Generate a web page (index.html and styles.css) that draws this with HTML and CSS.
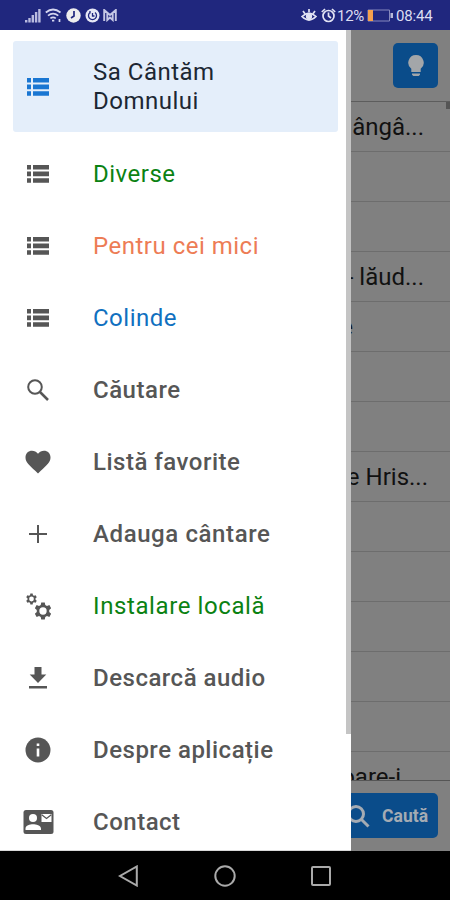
FILE: index.html
```html
<!DOCTYPE html>
<html lang="ro">
<head>
<meta charset="utf-8">
<title>Sa Cântăm Domnului</title>
<link rel="stylesheet" href="styles.css">
</head>
<body>
<svg width="0" height="0" class="defs">
  <symbol id="list" viewBox="0 0 22 18"><path d="M0 0h4v4.500H0zM6 0h16v4.500H6zM0 6.500h4v4.700H0zM6 6.500h16v4.700H6zM0 13.200h4v4.500H0zM6 13.200h16v4.500H6z"/></symbol>
  <symbol id="gear" viewBox="0 0 24 24"><path fill-rule="evenodd" d="M9.500 0h5l.7 3.600 2.400 1.400L21 3.700l2.500 4.400-2.700 2.400v3l2.700 2.400-2.500 4.400-3.400-1.300-2.400 1.400-.7 3.600h-5l-.7-3.600L6.400 19 3 20.300.5 15.900l2.700-2.400v-3L.5 8.100 3 3.700 6.400 5l2.400-1.400zM12 6.800a5.200 5.200 0 1 0 0 10.400 5.200 5.200 0 0 0 0-10.400z"/></symbol>
</svg>
<div class="phone">
  <header class="status">
    <div class="status-icons">
      <svg width="16" height="14" viewBox="0 0 16 14"><path d="M0 11h2.400v2.500H0zM3.300 9h2.400v4.500H3.300zM6.600 6H9v7.500H6.600zM9.900 3h2.400v10.500H9.900zM13.200 0h2.400v13.500h-2.400z" fill="#b9bbe0"/></svg>
      <svg width="17" height="15" viewBox="0 0 17 15" fill="none" stroke="#d5d6ef" stroke-width="1.700"><path d="M.8 4.500Q8 -1.500 15.500 4.500M3 7.600Q8 3.500 13.300 7.600M5.400 10.400Q8 8.500 10.800 10.400"/><path d="M7 12.700h2.300M14.500 11v3" stroke-width="1.700"/></svg>
      <svg width="15" height="15" viewBox="0 0 15 15"><circle cx="7.500" cy="7.500" r="7.200" fill="#eee"/><path d="M8 3v5L5 10" fill="none" stroke="#20277e" stroke-width="1.700"/></svg>
      <svg width="15" height="15" viewBox="0 0 15 15"><circle cx="7.500" cy="7.500" r="7" fill="#e6e7f5"/><path d="M5 4.500a4 4 0 1 0 5 0M7.500 5v3h2M5 3v2.500" fill="none" stroke="#20277e" stroke-width="1.300"/></svg>
      <svg width="14" height="13" viewBox="0 0 14 13" fill="none" stroke="#c5c7e5" stroke-width="1.900"><path d="M1.200 12V1L7 6l5.800-5v11M4.300 4v7L7 8.500 9.700 11V4"/></svg>
    </div>
    <div class="status-right">
      <svg width="16" height="15" viewBox="0 0 16 15" fill="none" stroke="#e2e3f4" stroke-width="1.700"><path d="M1 8.500Q8 2 15 8.500 8 15.500 1 8.500zM8 4V1M3.800 5.500 2 3M12.200 5.500 14 3"/><circle cx="8" cy="8.300" r="2.300" fill="#e2e3f4"/></svg>
      <svg width="15" height="15" viewBox="0 0 15 15" fill="none" stroke="#e2e3f4" stroke-width="1.700"><circle cx="7.500" cy="8" r="5.500"/><path d="M7.500 4.500V8l2.500 2M.8 4 4 1M14.200 4 11 1"/></svg>
      <span class="percent">12%</span>
      <svg width="26" height="13" viewBox="0 0 26 13"><path d="M1 1h21.500v11H1z" fill="none" stroke="#8588bd"/><path d="M1 1h5v11H1z" fill="#f3a04e"/><path d="M23.500 4H26v5h-2.500z" fill="#b8bad9"/></svg>
      <span class="time">08:44</span>
    </div>
  </header>

  <main class="screen">
    <section class="page">
      <div class="toolbar"><button class="bulb"><svg width="16" height="22" viewBox="0 0 16 22" fill="#a3a6a9"><path d="M8 0a7.700 7.700 0 0 0-4.700 13.800V17h9.400v-3.200A7.700 7.700 0 0 0 8 0zM4 18.500h8v1.300L10.700 21H5.300L4 19.800z"/></svg></button></div>
      <div class="songs">
        <div class="song s1">ângâ...</div>
        <div class="song"></div>
        <div class="song"></div>
        <div class="song s2">- lăud...</div>
        <div class="song s3">e</div>
        <div class="song"></div>
        <div class="song"></div>
        <div class="song s4">e Hris...</div>
        <div class="song"></div>
        <div class="song"></div>
        <div class="song"></div>
        <div class="song"></div>
        <div class="song"></div>
        <div class="song s5">oare-i</div>
        <i class="thumb"></i>
      </div>
      <div class="bottom"><button class="search"><svg width="24" height="24" viewBox="0 0 24 24" fill="none" stroke="#a4abb3" stroke-width="3"><circle cx="10" cy="10" r="7.500"/><path d="m15.500 15.500 7 7"/></svg>Caută</button></div>
    </section>

    <nav class="drawer">
      <a class="item active"><span class="icon"><svg width="22" height="18"><use href="#list"/></svg></span><span class="label">Sa Cântăm<br>Domnului</span></a>
      <a class="item"><span class="icon"><svg width="22" height="18"><use href="#list"/></svg></span><span class="label green">Diverse</span></a>
      <a class="item"><span class="icon"><svg width="22" height="18"><use href="#list"/></svg></span><span class="label coral">Pentru cei mici</span></a>
      <a class="item"><span class="icon"><svg width="22" height="18"><use href="#list"/></svg></span><span class="label blue">Colinde</span></a>
      <a class="item"><span class="icon"><svg width="22" height="22" viewBox="0 0 22 22" fill="none" stroke="#565656" stroke-width="2"><circle cx="8" cy="8" r="6.800"/><path d="m13 13 8 8" stroke-width="2.500"/></svg></span><span class="label med">Căutare</span></a>
      <a class="item"><span class="icon"><svg width="26" height="24" viewBox="0 0 26 24"><path d="M13 23.500 10.500 21C4 15 .5 12 .5 7.500.500 3.500 3.400.8 7 .8c2.300 0 4.500 1 6 2.900C14.500 1.800 16.700.8 19 .8c3.600 0 6.500 2.700 6.500 6.700 0 4.500-3.500 7.500-10 13.500z"/></svg></span><span class="label med">Listă favorite</span></a>
      <a class="item"><span class="icon"><svg width="18" height="18" viewBox="0 0 18 18"><path d="M8 0h2v8h8v2h-8v8H8v-8H0V8h8z"/></svg></span><span class="label med wide">Adauga cântare</span></a>
      <a class="item"><span class="icon gears"><svg width="26" height="27" viewBox="0 0 26 27"><use href="#gear" width="11" height="12"/><use href="#gear" x="8.500" y="9" width="17" height="18"/></svg></span><span class="label green wide">Instalare locală</span></a>
      <a class="item"><span class="icon"><svg width="18" height="22" viewBox="0 0 18 22"><path d="M5.500 0h7v7.500h4.800L9 16 .7 7.500h4.800zM0 19h18v2.500H0z"/></svg></span><span class="label med">Descarcă audio</span></a>
      <a class="item"><span class="icon"><svg width="26" height="26" viewBox="0 0 26 26"><circle cx="13" cy="13" r="12.500"/><path d="M11.700 6.500h2.600v2.600h-2.600zM11.700 11.500h2.600v8h-2.600z" fill="#fff"/></svg></span><span class="label med">Despre aplicație</span></a>
      <a class="item"><span class="icon"><svg width="31" height="24" viewBox="0 0 31 24"><rect x=".5" width="30" height="24" rx="2.500"/><g fill="#fff"><circle cx="10" cy="8" r="4"/><path d="M2.500 20v-1.500c0-3 4.500-4.300 7.500-4.300s8 1.300 8 4.300V20zM18.500 4h10v8h-10z"/></g><path d="m18.700 4.700 4.800 3.800 4.800-3.800" fill="none" stroke="#565656" stroke-width="1.200"/></svg></span><span class="label med">Contact</span></a>
      <i class="scrollbar"></i>
    </nav>
  </main>

  <footer class="navbar">
    <svg width="22" height="22" viewBox="0 0 22 22"><path d="M18.800 1.500v19L2 11z"/></svg>
    <svg width="22" height="22" viewBox="0 0 22 22"><circle cx="11" cy="11" r="9.700"/></svg>
    <svg width="22" height="22" viewBox="0 0 22 22"><rect x="2" y="2" width="18" height="18" rx="1"/></svg>
  </footer>
</div>
</body>
</html>
```

FILE: styles.css
```css
* { box-sizing: border-box; }
body { margin: 0; font-family: Roboto, sans-serif; }
.defs { position: absolute; }
.phone { width: 450px; height: 900px; display: flex; flex-direction: column; overflow: hidden; background: #000; }
svg { display: block; flex: none; }
button { border: 0; padding: 0; font-family: inherit; }

.status { height: 30px; flex: none; background: #20277e; color: #dcddf1; display: flex; justify-content: space-between; align-items: center; padding: 1px 16px 0 25px; }
.status-icons { display: flex; align-items: center; gap: 4px; }
.status-icons svg:last-child { margin-left: -1px; }
.status-right { display: flex; align-items: center; font-size: 15px; }
.status-right svg:nth-of-type(2) { margin-left: 4px; }
.percent { width: 28px; margin: 0 2px 0 1px; font-size: 15px; letter-spacing: -.3px; white-space: nowrap; padding-top: 1px; }
.time { width: 38px; margin-left: 3px; letter-spacing: -.15px; white-space: nowrap; }

.screen { position: relative; height: 821px; flex: none; overflow: hidden; }
.page { height: 100%; background: #808080; display: flex; flex-direction: column; }
.toolbar { height: 72px; flex: none; border-bottom: 1px solid #5d5d5d; display: flex; justify-content: flex-end; padding: 13px 12px 0; }
.bulb { width: 45px; height: 45px; border-radius: 5px; background: #0a4c8a; display: flex; align-items: center; justify-content: center; }
.songs { position: relative; flex: 1; min-height: 0; overflow: hidden; }
.song { height: 50px; border-bottom: 1px solid #6d6d6d; display: flex; align-items: center; justify-content: flex-end; font-size: 24px; color: #111; white-space: nowrap; padding-right: 26px; }
.s3 { padding-right: 97px; }
.s4 { padding-right: 22px; }
.s5 { padding-right: 49px; }
.thumb { position: absolute; top: 0; right: 0; width: 4px; height: 7px; background: #555; }
.bottom { height: 71px; flex: none; border-top: 1px solid #555; display: flex; justify-content: flex-end; padding: 12px 12px 0; }
.search { width: 110px; height: 45px; border-radius: 5px; background: #0a4c8a; color: #a4abb3; display: flex; align-items: center; justify-content: flex-end; gap: 12px; padding-right: 10px; font-size: 17.500px; font-weight: 700; }

.drawer { position: absolute; left: 0; top: 0; width: 351px; height: 821px; background: #fff; padding: 11px 13px; overflow: hidden; border-bottom: 1px solid #d8d8d8; }
.item { height: 72px; display: flex; align-items: center; font-size: 24px; line-height: 29px; color: #565656; fill: #565656; }
.active { height: 91px; width: 325px; margin-bottom: 6px; border-radius: 3px; background: #e4eefa; color: #1c2733; fill: #1976d2; }
.icon { width: 50px; display: flex; justify-content: center; flex: none; }
.gears { padding-left: 2px; }
.label { margin-left: 30px; white-space: nowrap; letter-spacing: .5px; }
.med { font-weight: 500; }
.wide { letter-spacing: .6px; }
.green { color: #0b8212; }
.coral { color: #ed7c55; }
.blue { color: #1070bf; }
.scrollbar { position: absolute; top: 0; right: 0; width: 5px; height: 704px; background: #c4c4c4; }

.navbar { flex: 1; background: #000; display: flex; justify-content: center; align-items: center; gap: 74px; fill: none; stroke: #aaa; stroke-width: 2; }
```
